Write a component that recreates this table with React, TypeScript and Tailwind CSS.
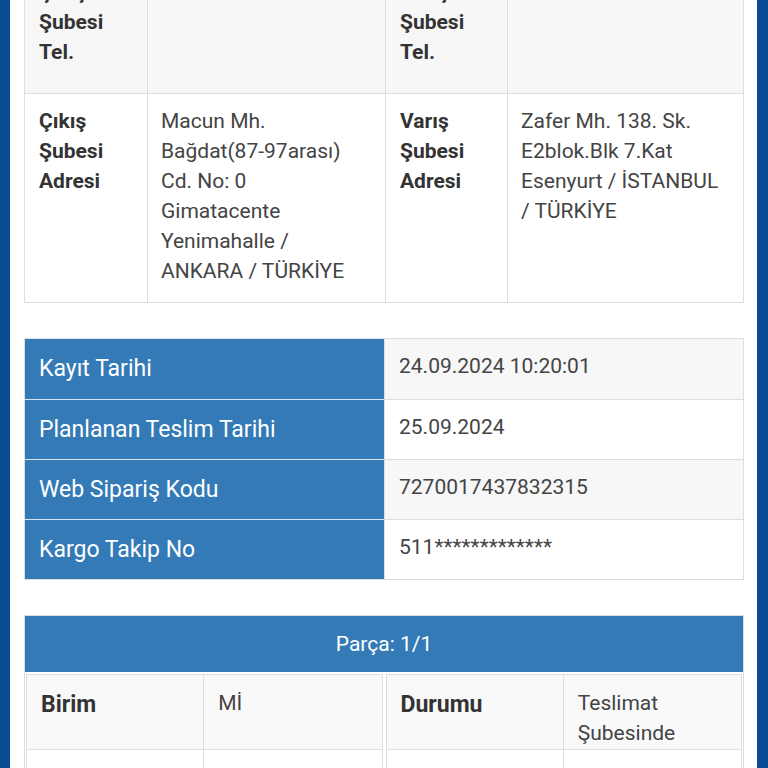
import React from 'react';

const summary = [
  { label: 'Kayıt Tarihi', value: '24.09.2024 10:20:01' },
  { label: 'Planlanan Teslim Tarihi', value: '25.09.2024' },
  { label: 'Web Sipariş Kodu', value: '7270017437832315' },
  { label: 'Kargo Takip No', value: '511*************' },
];

function AddressTable() {
  return (
    <div className="border border-[#dedede] mt-[-37px] text-[21px]">
      {/* partially scrolled-away phone row */}
      <div className="grid grid-cols-[123px_238px_122px_1fr] bg-[#f7f7f7] h-[130px] border-b border-[#dedede]">
        <div className="px-[14px] pt-[13px] font-bold text-[#333] border-r border-[#dedede]">
          Çıkış
          <br />
          Şubesi
          <br />
          Tel.
        </div>
        <div className="border-r border-[#dedede]"></div>
        <div className="px-[14px] pt-[13px] font-bold text-[#333] border-r border-[#dedede]">
          Varış
          <br />
          Şubesi
          <br />
          Tel.
        </div>
        <div></div>
      </div>
      <div className="grid grid-cols-[123px_238px_122px_1fr] bg-white">
        <div className="px-[14px] pt-[12px] pb-[16px] font-bold text-[#333] border-r border-[#dedede]">
          Çıkış
          <br />
          Şubesi
          <br />
          Adresi
        </div>
        <div className="px-[13px] pt-[12px] pb-[16px] text-[#444] border-r border-[#dedede]">
          Macun Mh.
          <br />
          Bağdat(87-97arası)
          <br />
          Cd. No: 0
          <br />
          Gimatacente
          <br />
          Yenimahalle /
          <br />
          ANKARA / TÜRKİYE
        </div>
        <div className="px-[14px] pt-[12px] pb-[16px] font-bold text-[#333] border-r border-[#dedede]">
          Varış
          <br />
          Şubesi
          <br />
          Adresi
        </div>
        <div className="px-[13px] pt-[12px] pb-[16px] text-[#444]">
          Zafer Mh. 138. Sk.
          <br />
          E2blok.Blk 7.Kat
          <br />
          Esenyurt / İSTANBUL
          <br />
          / TÜRKİYE
        </div>
      </div>
    </div>
  );
}

function SummaryTable() {
  return (
    <div className="mt-[35px] border border-[#dedede]">
      {summary.map((row, i) => (
        <div
          key={row.label}
          className={`grid grid-cols-[359px_1fr] h-[60px] ${i > 0 ? 'border-t border-[#dedede]' : ''}`}
        >
          <div className={`bg-[#337ab7] text-white text-[23px] px-[14px] flex items-center ${i > 0 ? 'border-t border-[#d9e6f2] -mt-px' : ''}`}>
            {row.label}
          </div>
          <div className={`px-[14px] pt-[12px] text-[#444] text-[21px] border-l border-[#dedede] ${i % 2 === 0 ? 'bg-[#f7f7f7]' : 'bg-white'}`}>
            {row.value}
          </div>
        </div>
      ))}
    </div>
  );
}

function PieceCell({ label, value }: { label: string; value: React.ReactNode }) {
  return (
    <div className="border border-[#dedede] grid grid-cols-2">
      <div className="bg-[#f9f9f9] px-[14px] pt-[15px] h-[74px] font-bold text-[#333] text-[23px] border-r border-[#dedede]">
        {label}
      </div>
      <div className="bg-[#f9f9f9] px-[14px] pt-[13px] text-[#444] text-[21px] leading-[30px]">{value}</div>
      <div className="bg-white h-[40px] border-t border-[#dedede] border-r"></div>
      <div className="bg-white h-[40px] border-t border-[#dedede]"></div>
    </div>
  );
}

function PieceTable() {
  return (
    <div className="mt-[35px] border border-[#dedede]">
      <div className="bg-[#337ab7] h-[56px] flex items-center justify-center text-white text-[21px]">
        Parça: 1/1
      </div>
      <div className="grid grid-cols-2 gap-[3px] px-px pt-[2px]">
        <PieceCell label="Birim" value="Mİ" />
        <PieceCell
          label="Durumu"
          value={
            <>
              Teslimat
              <br />
              Şubesinde
            </>
          }
        />
      </div>
    </div>
  );
}

export default function App() {
  return (
    <div
      className="flex h-[768px] overflow-hidden bg-white text-[20px] leading-[30px]"
      style={{ fontFamily: 'Roboto, "Noto Sans", sans-serif' }}
    >
      <div className="w-[10px] shrink-0 bg-[#0b4c97]"></div>
      <div className="flex-1 pl-[14px] pr-[13px] overflow-hidden">
        <AddressTable />
        <SummaryTable />
        <PieceTable />
      </div>
      <div className="w-[11px] shrink-0 bg-[#0b4c97]"></div>
    </div>
  );
}
